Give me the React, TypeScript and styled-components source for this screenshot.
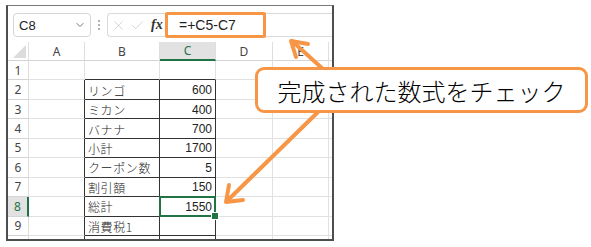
import React from "react";
import styled, { createGlobalStyle, css } from "styled-components";
import { X, Check, ChevronDown } from "lucide-react";

const GlobalStyle = createGlobalStyle`
	html, body {
		margin: 0;
		padding: 0;
		background: #fff;
	}
	* {
		box-sizing: border-box;
	}
`;

const ORANGE = "#F79646";
const GREEN = "#217346";

const Page = styled.div`
	position: relative;
	width: 591px;
	height: 247px;
	padding: 5px 0 0 6px;
	overflow: hidden;
	background: #fff;
	font-family: "Noto Sans", "Liberation Sans", sans-serif;
`;

const Sheet = styled.div`
	width: 328px;
	height: 236px;
	border: 2px solid #4e4e4e;
	border-top: 1px solid #7a7a7a;
	display: flex;
	flex-direction: column;
	overflow: hidden;
	background: #fff;
`;

const FormulaBar = styled.div`
	height: 36px;
	flex: none;
	display: flex;
	align-items: center;
	padding: 2px 0 0 5px;
`;

const NameBox = styled.div`
	width: 78px;
	height: 24px;
	border: 1px solid #d6d6d6;
	border-radius: 4px;
	display: flex;
	align-items: center;
	justify-content: space-between;
	padding: 0 4px 0 5px;
	font-family: "Liberation Sans", "Noto Sans", sans-serif;
	font-size: 13px;
	color: #222;
	svg {
		color: #555;
	}
`;

const Dots = styled.div`
	width: 16px;
	display: flex;
	flex-direction: column;
	align-items: center;
	gap: 2px;
	span {
		width: 2px;
		height: 2px;
		border-radius: 50%;
		background: #9a9a9a;
	}
`;

const FnBox = styled.div`
	width: 56px;
	height: 24px;
	border: 1px solid #dadada;
	border-right: none;
	border-radius: 4px 0 0 4px;
	display: flex;
	align-items: center;
	gap: 4px;
	padding-left: 3px;
	color: #c2c2c2;
`;

const Fx = styled.span`
	font-family: "Liberation Serif", serif;
	font-style: italic;
	font-weight: bold;
	font-size: 14px;
	color: #333;
	margin-left: 2px;
`;

const FormulaInput = styled.div`
	flex: 1;
	height: 24px;
	border-top: 1px solid #dadada;
	border-bottom: 1px solid #dadada;
	display: flex;
	align-items: center;
	padding-left: 2px;
`;

const Highlight = styled.div`
	width: 101px;
	height: 26px;
	border: 3px solid ${ORANGE};
	border-radius: 2px;
	display: flex;
	align-items: center;
	padding-left: 11px;
	font-family: "Liberation Sans", "Noto Sans", sans-serif;
	font-size: 14px;
	color: #222;
	background: #fff;
`;

const Grid = styled.div`
	display: grid;
	grid-template-columns: 21px 56px 75px 56px 57px 56px 1fr;
	grid-template-rows: 19px repeat(10, 19.44px);
`;

const headBase = css`
	display: flex;
	align-items: center;
	justify-content: center;
	font-size: 12px;
	color: #444;
	border-right: 1px solid #dedede;
	border-bottom: 1px solid #d4d4d4;
`;

const Corner = styled.div`
	${headBase};
	position: relative;
	&::after {
		content: "";
		position: absolute;
		right: 2px;
		bottom: 2px;
		border-left: 13px solid transparent;
		border-bottom: 13px solid #dcdcdc;
	}
`;

const ColHead = styled.div<{ $active?: boolean }>`
	${headBase};
	${p =>
		p.$active &&
		css`
			background: #e2e2e2;
			color: ${GREEN};
			border-bottom: 2px solid ${GREEN};
		`}
`;

const RowHead = styled.div<{ $active?: boolean }>`
	${headBase};
	${p =>
		p.$active &&
		css`
			background: #e2e2e2;
			color: ${GREEN};
			border-right: 2px solid ${GREEN};
		`}
`;

const Cell = styled.div<{ $r?: boolean; $b?: boolean; $num?: boolean; $sel?: boolean }>`
	position: relative;
	display: flex;
	align-items: center;
	justify-content: ${p => (p.$num ? "flex-end" : "flex-start")};
	padding: 1px 3px 0 3px;
	font-family: ${p =>
		p.$num
			? `"Liberation Sans", "Noto Sans", sans-serif`
			: `"Noto Sans CJK JP", "Noto Sans", sans-serif`};
	font-size: ${p => (p.$num ? "12px" : "12px")};
	font-weight: ${p => (p.$num ? 400 : 300)};
	letter-spacing: ${p => (p.$num ? "0" : "0.6px")};
	color: #222;
	white-space: nowrap;
	border-right: 1px solid ${p => (p.$r ? "#333" : "#e1e1e1")};
	border-bottom: 1px solid ${p => (p.$b ? "#333" : "#e1e1e1")};
	${p =>
		p.$sel &&
		css`
			z-index: 2;
			&::after {
				content: "";
				position: absolute;
				inset: -1px -1px -1px -1px;
				border: 2px solid ${GREEN};
			}
			&::before {
				content: "";
				position: absolute;
				right: -4px;
				bottom: -4px;
				width: 6px;
				height: 6px;
				background: ${GREEN};
				border: 1px solid #fff;
				z-index: 3;
			}
		`}
`;

const Arrows = styled.svg`
	position: absolute;
	left: 0;
	top: 0;
	pointer-events: none;
`;

const Callout = styled.div`
	position: absolute;
	left: 255px;
	top: 67px;
	width: 333px;
	height: 46px;
	border: 3px solid ${ORANGE};
	border-radius: 9px;
	background: #fff;
	display: flex;
	align-items: center;
	justify-content: center;
	font-family: "Noto Sans CJK JP", sans-serif;
	font-size: 24px;
	font-weight: 300;
	color: #000;
	padding-top: 1px;
`;

const columns = ["A", "B", "C", "D", "E", ""];

const rows: [string, string][] = [
	["", ""],
	["リンゴ", "600"],
	["ミカン", "400"],
	["バナナ", "700"],
	["小計", "1700"],
	["クーポン数", "5"],
	["割引額", "150"],
	["総計", "1550"],
	["消費税1", ""],
	["税込合計", ""],
];

export default function App() {
	return (
		<>
			<GlobalStyle />
			<Page>
				<Sheet>
					<FormulaBar>
						<NameBox>
							C8
							<ChevronDown size={12} strokeWidth={1.6} />
						</NameBox>
						<Dots>
							<span />
							<span />
							<span />
						</Dots>
						<FnBox>
							<X size={15} strokeWidth={1.1} />
							<Check size={15} strokeWidth={1.1} />
							<Fx>fx</Fx>
						</FnBox>
						<FormulaInput>
							<Highlight>=+C5-C7</Highlight>
						</FormulaInput>
					</FormulaBar>
					<Grid>
						<Corner />
						{columns.map((c, i) => (
							<ColHead key={i} $active={c === "C"}>
								{c}
							</ColHead>
						))}
						{rows.map(([label, value], i) => {
							const n = i + 1;
							const inTable = n >= 2;
							return (
								<React.Fragment key={n}>
									<RowHead $active={n === 8}>{n}</RowHead>
									<Cell $r={inTable} />
									<Cell $r={inTable} $b>
										{label}
									</Cell>
									<Cell $r={inTable} $b $num $sel={n === 8}>
										{value}
									</Cell>
									<Cell />
									<Cell />
									<Cell />
								</React.Fragment>
							);
						})}
					</Grid>
				</Sheet>
				<Arrows width={591} height={247} viewBox='0 0 591 247'>
					<g
						stroke={ORANGE}
						strokeWidth={4}
						strokeLinecap='round'
						strokeLinejoin='round'
						fill='none'
					>
						<line x1={324} y1={70} x2={292} y2={41} />
						<polyline points='308,44 291,41 296,57' />
						<line x1={318} y1={112} x2={227} y2={201} />
						<polyline points='229,185 226,202 243,200' />
					</g>
				</Arrows>
				<Callout>完成された数式をチェック</Callout>
			</Page>
		</>
	);
}
